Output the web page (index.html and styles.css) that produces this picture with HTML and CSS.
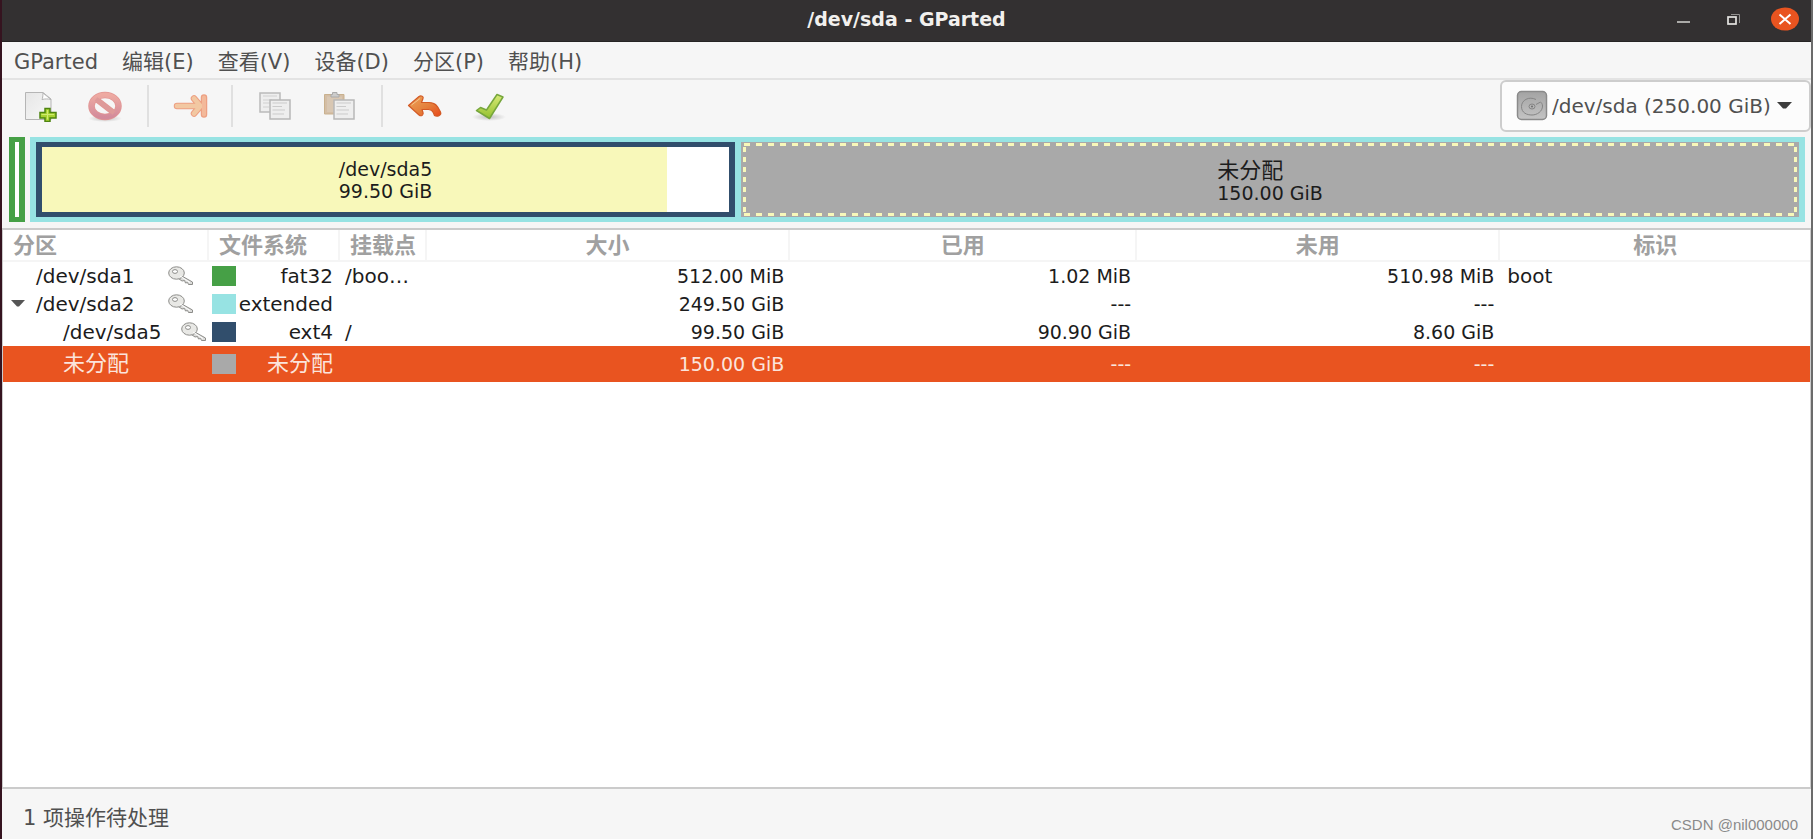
FILE: index.html
```html
<!DOCTYPE html>
<html lang="zh-CN">
<head>
<meta charset="utf-8">
<title>/dev/sda - GParted</title>
<link rel="stylesheet" href="styles.css">
</head>
<body>
<svg class="defs" width="0" height="0" aria-hidden="true">
  <defs>
    <linearGradient id="paper" x1="0" y1="0" x2="1" y2="1"><stop offset="0" stop-color="#e6e6e6"/><stop offset="1" stop-color="#f8f8f8"/></linearGradient>
    <linearGradient id="orange" x1="0" y1="0" x2="1" y2="1"><stop offset="0" stop-color="#eea55a"/><stop offset=".55" stop-color="#e4803c"/><stop offset="1" stop-color="#e9481a"/></linearGradient>
    <linearGradient id="red" x1="0" y1="0" x2="0" y2="1"><stop offset="0" stop-color="#eeaaa2"/><stop offset="1" stop-color="#d38b9b"/></linearGradient>
    <linearGradient id="green" x1="0" y1="0" x2="0" y2="1"><stop offset="0" stop-color="#d8ea78"/><stop offset="1" stop-color="#93c02f"/></linearGradient>
    <linearGradient id="disk" x1="0" y1="0" x2="0" y2="1"><stop offset="0" stop-color="#a3a3a3"/><stop offset="1" stop-color="#c4c4c4"/></linearGradient>
    <radialGradient id="shade"><stop offset="0" stop-color="#000" stop-opacity=".22"/><stop offset="1" stop-color="#000" stop-opacity="0"/></radialGradient>
    <symbol id="key" viewBox="0 0 26 20">
      <path d="M12 9 L24.500 16 V18.500 H20.500 L19.500 16.500 L17.500 17 L16.500 14.500 L14 15 L9 11.500Z" fill="#dcdcda" stroke="#8d8d8a"/>
      <ellipse cx="8.500" cy="7" rx="7.800" ry="6.200" fill="#e8e8e5" stroke="#8d8d8a"/>
      <ellipse cx="7" cy="5.500" rx="2.500" ry="1.900" fill="#fff" stroke="#8d8d8a"/>
      <path d="M12 10 L22 16.500" stroke="#fff"/>
    </symbol>
  </defs>
</svg>
<div class="window">
  <header class="titlebar">
    <h1 class="title">/dev/sda - GParted</h1>
    <div class="controls">
      <button class="control" aria-label="最小化"><svg width="14" height="24" viewBox="0 0 14 24"><path d="M0 15H13" stroke="#d5d3d1" stroke-width="1.500"/></svg></button>
      <button class="control" aria-label="还原"><svg width="14" height="24" viewBox="0 0 14 24"><path d="M4 7.500H12.500V16" fill="none" stroke="#918f8e"/><rect x="1" y="10" width="8" height="7" fill="none" stroke="#e5e3e1" stroke-width="1.700"/></svg></button>
      <button class="control" aria-label="关闭"><svg width="28" height="24" viewBox="0 0 28 24"><ellipse cx="14" cy="12" rx="14" ry="11.500" fill="#e95420"/><path d="M8.500 7.500L19.500 17M19.500 7.500L8.500 17" stroke="#fff" stroke-width="2"/></svg></button>
    </div>
  </header>
  <nav class="menubar">
    <button class="menu">GParted</button>
    <button class="menu">编辑(E)</button>
    <button class="menu">查看(V)</button>
    <button class="menu">设备(D)</button>
    <button class="menu">分区(P)</button>
    <button class="menu">帮助(H)</button>
  </nav>
  <div class="toolbar">
    <div class="group">
      <button class="tool" aria-label="新建"><svg width="36" height="32" viewBox="0 0 36 32">
        <path d="M2.500 2.500H20L28 9V29.500H2.500Z" fill="url(#paper)" stroke="#b5b5b5"/>
        <path d="M20 3C20 6 19.500 8.500 19 9.500C22 8.700 25 8.800 28 9.500Z" fill="#fff" stroke="#b5b5b5"/>
        <path d="M22 18.500H27V22.500H33V28H27V31.500H22V28H17V22.500H22Z" fill="#a9d332" stroke="#4e8410" stroke-width="1.500"/><path d="M24.500 20V29.500M18.500 24.500H31" stroke="#d1ec71"/></svg></button>
      <button class="tool" disabled aria-label="删除"><svg width="36" height="32" viewBox="0 0 36 32">
        <ellipse cx="18" cy="28.500" rx="17" ry="3.500" fill="url(#shade)"/>
        <ellipse cx="18" cy="16" rx="13.500" ry="11" fill="none" stroke="#e29592" stroke-width="6.500"/>
        <path d="M9 9L27 23" stroke="#e29592" stroke-width="6"/>
        <ellipse cx="18" cy="16" rx="13.500" ry="11" fill="none" stroke="url(#red)" stroke-width="5"/>
        <path d="M9 9L27 23" stroke="#de9a99" stroke-width="4.500"/></svg></button>
    </div>
    <div class="group">
      <button class="tool" disabled aria-label="调整大小/移动"><svg width="36" height="32" viewBox="0 0 36 32" fill="none" stroke-linecap="round" stroke-linejoin="round">
        <path d="M5 16H27M22 8.500L28.500 16L22 23.500M32 7.500V24.500" stroke="#eda083" stroke-width="6.500"/>
        <path d="M5 16H27M22 8.500L28.500 16L22 23.500" stroke="#f2c8a2" stroke-width="4.500"/>
        <path d="M32 7.500V24.500" stroke="#f3b99a" stroke-width="4"/></svg></button>
    </div>
    <div class="group">
      <button class="tool" disabled aria-label="复制"><svg width="36" height="32" viewBox="0 0 36 32">
        <path d="M3 3H23V22H3Z" fill="#eee" stroke="#bbb" stroke-width="1.500"/><path d="M6 6H20M6 10H15M6 13H13M6 17H12" stroke="#d0d0d0"/>
        <path d="M13 10H33V29H13Z" fill="#eee" stroke="#b8b8b8" stroke-width="1.500"/><path d="M15.500 13H30M15.500 16.500H25M15.500 20H28M15.500 24H27" stroke="#cbcbcb"/></svg></button>
      <button class="tool" disabled aria-label="粘贴"><svg width="36" height="32" viewBox="0 0 36 32">
        <path d="M3.500 4.500H23V24H3.500Z" fill="#d4bea5" stroke="#c9b18e"/><path d="M6 6.500H21V22H6Z" fill="#d8c7b3"/>
        <path d="M10 7V4.500H11.500V2.500H16V4.500H18V7Z" fill="#ccc" stroke="#aaa"/>
        <path d="M13 10H33V29H13Z" fill="#eee" stroke="#b8b8b8" stroke-width="1.500"/><path d="M15.500 13H30M15.500 16.500H25M15.500 20H28M15.500 24H27" stroke="#cbcbcb"/></svg></button>
    </div>
    <div class="group">
      <button class="tool" aria-label="撤销"><svg width="36" height="32" viewBox="0 0 36 32">
        <path d="M1.500 15.500L12 6.500C14 5 17 6.500 16 8.500L14.500 12.500H22C29 12.500 31 17 33.500 22C35 25.500 30 27 27.500 25.500C26 21.500 25 20 21.500 19.500H15L16 22.500C17 25.500 14 26.500 12 25Z" fill="url(#orange)" stroke="#d35a25" stroke-width="1.200" stroke-linejoin="round"/><path d="M4.500 15L13 8.500" stroke="#f6c38a"/></svg></button>
      <button class="tool" aria-label="应用"><svg width="36" height="32" viewBox="0 0 36 32">
        <ellipse cx="18" cy="27" rx="17" ry="4" fill="url(#shade)"/>
        <path d="M5.500 20.500L9.500 17.500L15.500 20L26 4.500L32 7L18.500 28.500Z" fill="url(#green)" stroke="#76a63c" stroke-width="1.500" stroke-linejoin="round"/></svg></button>
    </div>
    <label class="device">
      <svg width="32" height="32" viewBox="0 0 32 32"><rect x="1.500" y="1.500" width="29" height="28" rx="4" fill="url(#disk)" stroke="#8a8a8a" stroke-width="1.500"/>
        <path d="M20 9.500C13 6 5.500 10 5.500 16.500S11 25 16 25S26.500 21.500 26.500 16C26.500 14 25.500 13 24.500 12L20 14.500" fill="none" stroke="#858585"/><ellipse cx="16" cy="16.500" rx="3" ry="2.500" fill="none" stroke="#858585"/><circle cx="16" cy="16.500" r="1" fill="#6e6e6e"/></svg>
      <select class="device-select" aria-label="设备"><option>/dev/sda (250.00 GiB)</option></select>
      <svg class="device-arrow" width="16" height="8" viewBox="0 0 16 8"><path d="M0 0H15L9 6.500H6Z" fill="#3d3d3d"/></svg>
    </label>
  </div>
  <div class="diskmap">
    <div class="part-fat"></div>
    <div class="part-extended">
      <div class="part-ext4"><div class="used"></div><p class="caption">/dev/sda5<br>99.50 GiB</p></div>
      <div class="part-free"><p class="caption"><span class="cjk">未分配</span><br>150.00 GiB</p></div>
    </div>
  </div>
  <main class="list">
    <table class="partitions">
      <colgroup><col class="c-name"><col class="c-fs"><col class="c-mount"><col class="c-size"><col class="c-used"><col class="c-unused"><col></colgroup>
      <thead><tr><th class="start">分区</th><th class="start">文件系统</th><th class="start">挂载点</th><th>大小</th><th>已用</th><th>未用</th><th>标识</th></tr></thead>
      <tbody>
        <tr><td><div class="name">/dev/sda1<svg class="key" width="26" height="20"><use href="#key"/></svg></div></td><td><div class="fs"><i class="swatch fat"></i>fat32</div></td><td class="mount">/boo…</td><td class="num">512.00 MiB</td><td class="num">1.02 MiB</td><td class="num">510.98 MiB</td><td class="flag">boot</td></tr>
        <tr><td><div class="name parent"><svg class="expander" width="14" height="8" viewBox="0 0 14 8"><path d="M0 0H14L8 6.500H6Z" fill="#555"/></svg>/dev/sda2<svg class="key" width="26" height="20"><use href="#key"/></svg></div></td><td><div class="fs"><i class="swatch extended"></i>extended</div></td><td></td><td class="num">249.50 GiB</td><td class="num">---</td><td class="num">---</td><td></td></tr>
        <tr><td><div class="name child">/dev/sda5<svg class="key" width="26" height="20"><use href="#key"/></svg></div></td><td><div class="fs"><i class="swatch ext4"></i>ext4</div></td><td class="mount">/</td><td class="num">99.50 GiB</td><td class="num">90.90 GiB</td><td class="num">8.60 GiB</td><td></td></tr>
        <tr class="selected"><td><div class="name child"><span class="cjk">未分配</span></div></td><td><div class="fs"><i class="swatch free"></i><span class="cjk">未分配</span></div></td><td></td><td class="num">150.00 GiB</td><td class="num">---</td><td class="num">---</td><td></td></tr>
      </tbody>
    </table>
  </main>
  <footer class="statusbar">
    <span class="pending">1 项操作待处理</span>
    <span class="credit">CSDN @nil000000</span>
  </footer>
</div>
</body>
</html>
```
FILE: styles.css
```css
* { box-sizing: border-box; }

body {
  margin: 0;
  font: 19px/28px "DejaVu Sans", "Noto Sans CJK SC", sans-serif;
  color: #1c1c1c;
  background: #f6f6f6;
}

button, select {
  margin: 0;
  padding: 0;
  border: 0;
  background: none;
  color: inherit;
  font: inherit;
}

svg { display: block; flex: none; }
.defs { position: absolute; }
.cjk { font-size: 22px; }

.window {
  display: flex;
  flex-direction: column;
  min-height: 100vh;
  border-left: 2px solid #35131f;
  border-right: 2px solid #6b6b6b;
}

.titlebar {
  display: grid;
  grid-template-columns: 1fr auto 1fr;
  align-items: center;
  height: 42px;
  padding: 0 12px 3px;
  background: #333031;
  border-bottom: 1px solid #262424;
  color: #f2f0ee;
}
.title { grid-column: 2; margin: 0; font-size: 19px; line-height: 28px; }
.controls { display: flex; justify-content: flex-end; align-items: center; gap: 36px; }
.control:last-child { margin-left: -6px; }

.menubar {
  display: flex;
  gap: 24px;
  height: 38px;
  padding: 3px 12px 0;
  border-bottom: 2px solid #e3e3e3;
  color: #505050;
}
.menu { font-size: 21px; }

.toolbar {
  display: flex;
  align-items: center;
  height: 51px;
  color: #505050;
}
.group {
  display: flex;
  gap: 28px;
  height: 42px;
  padding: 0 24px;
  align-items: center;
  border-right: 2px solid #e0e0e0;
}
.group:first-child { padding-left: 21px; }
.group:nth-child(2) { padding: 0 23px; }
.group:nth-child(4) { border-right: 0; }
.device {
  display: flex;
  align-items: center;
  gap: 4px;
  height: 52px;
  margin-left: auto;
  padding: 0 16px 0 14px;
  border: 2px solid #cdcdcd;
  border-radius: 6px;
  background: #fcfcfc;
}
.device-select { appearance: none; font-size: 20px; }
.device-arrow { margin-left: 2px; }

.diskmap {
  display: flex;
  gap: 5px;
  height: 97px;
  padding: 6px 6px 6px 7px;
}
.part-fat { width: 16px; border: 6px solid #46a046; border-width: 5px 6px; background: #fff; }
.part-extended {
  display: flex;
  flex: 1;
  gap: 6px;
  padding: 5px 6px;
  background: #97e3e3;
}
.part-ext4 {
  display: grid;
  place-items: center;
  flex: 693;
  border: 6px solid #314e6c;
  border-width: 5px 6px;
  background: #fff;
}
.used { grid-area: 1 / 1; justify-self: start; width: 91%; height: 100%; background: #f8f8ba; }
.part-free {
  display: grid;
  place-items: center;
  flex: 1063;
  padding: 6px 2px 1px;
  background:
    repeating-linear-gradient(90deg, #f8f8ba 0 6px, transparent 6px 12px) 3px 1px / calc(100% - 6px) 3px no-repeat,
    repeating-linear-gradient(90deg, #f8f8ba 0 6px, transparent 6px 12px) 3px calc(100% - 1px) / calc(100% - 6px) 3px no-repeat,
    repeating-linear-gradient(#f8f8ba 0 5px, transparent 5px 10px) 2px 5px / 3px calc(100% - 10px) no-repeat,
    repeating-linear-gradient(#f8f8ba 0 5px, transparent 5px 10px) calc(100% - 2px) 5px / 3px calc(100% - 10px) no-repeat,
    #a9a9a9;
}
.caption { margin: 0; line-height: 22px; }
.part-ext4 .caption { grid-area: 1 / 1; }

.list {
  flex: 1;
  border: 2px solid #cbcbcb;
  border-width: 2px 1px;
  background: #fff;
}
.partitions { width: 100%; table-layout: fixed; border-collapse: collapse; }
.c-name { width: 205px; }
.c-fs { width: 131px; }
.c-mount { width: 87px; }
.c-size, .c-unused { width: 20.1%; }
.c-used { width: 19.2%; }
th {
  height: 30px;
  padding: 2px 0 0;
  border-right: 2px solid #f5f5f5;
  border-bottom: 2px solid #f5f5f5;
  color: #a0a0a0;
  font-size: 22px;
  line-height: 28px;
}
th:last-child { border-right: 0; }
.start { padding-left: 10px; text-align: left; }
td { height: 28px; padding: 0; white-space: nowrap; }
.name, .fs, .mount, .flag { font-size: 20px; }
.name { display: flex; align-items: center; padding: 0 14px 0 33px; }
.parent { padding-left: 8px; }
.expander { margin-right: 11px; }
.child { padding: 0 1px 0 60px; }
.key { margin-left: auto; }
.fs { display: flex; align-items: center; justify-content: space-between; padding: 0 6px 0 4px; }
.swatch { width: 24px; height: 20px; }
.fat { background: #46a046; }
.extended { background: #97e3e3; }
.ext4 { background: #314e6c; }
.free { background: #a9a9a9; }
.mount { padding-left: 6px; }
.num { padding-right: 5px; text-align: right; }
.flag { padding-left: 8px; }
.selected { background: #e95420; color: #fbe4dc; }
.selected td { height: 36px; }

.statusbar {
  display: flex;
  justify-content: space-between;
  height: 50px;
  padding: 14px 13px 0 21px;
  color: #505050;
}
.pending { font-size: 21px; line-height: 30px; }
.credit {
  align-self: flex-end;
  color: #8a8a8a;
  font: 15px/28px "Liberation Sans", sans-serif;
}
```
